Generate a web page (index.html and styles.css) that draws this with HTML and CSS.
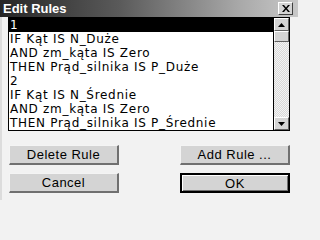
FILE: index.html
```html
<!DOCTYPE html>
<html>
<head>
<meta charset="utf-8">
<link rel="stylesheet" href="styles.css">
</head>
<body>
<div class="dialog">
  <div class="titlebar">
    <span class="title">Edit Rules</span>
    <span class="close">
      <svg width="8" height="7" viewBox="0 0 8 7"><path d="M0 0h2l2 2.5L6 0h2L5 3.5 8 7H6L4 4.5 2 7H0l3-3.5z" fill="#000"/></svg>
    </span>
  </div>
  <div class="body">
    <div class="listbox">
      <ul class="items">
        <li class="item selected">1</li>
        <li class="item">IF Kąt IS N_Duże</li>
        <li class="item">AND zm_kąta IS Zero</li>
        <li class="item">THEN Prąd_silnika IS P_Duże</li>
        <li class="item">2</li>
        <li class="item">IF Kąt IS N_Średnie</li>
        <li class="item">AND zm_kąta IS Zero</li>
        <li class="item">THEN Prąd_silnika IS P_Średnie</li>
      </ul>
      <div class="scrollbar">
        <div class="sbtn"><svg width="7" height="4" viewBox="0 0 7 4"><path d="M3.5 0L7 4H0z" fill="#000"/></svg></div>
        <div class="thumb"></div>
        <div class="track"></div>
        <div class="sbtn"><svg width="7" height="4" viewBox="0 0 7 4"><path d="M0 0h7L3.5 4z" fill="#000"/></svg></div>
      </div>
    </div>
    <div class="buttons">
      <button class="btn">Delete Rule</button>
      <button class="btn">Add Rule ...</button>
      <button class="btn">Cancel</button>
      <button class="btn default">OK</button>
    </div>
  </div>
</div>
</body>
</html>
```
FILE: styles.css
```css
html, body {
  margin: 0;
  padding: 0;
  background: #f2f2f2;
}
.dialog {
  width: 298px;
  height: 200px;
  font-family: "DejaVu Sans", Verdana, sans-serif;
  font-size: 12px;
  color: #000;
  border-left: 2px solid #dcdcdc;
  box-sizing: border-box;
}
.titlebar {
  height: 17px;
  margin-left: -2px;
  background: linear-gradient(to right, #262626 0%, #5a5a5a 40%, #a8a8a8 80%, #c8c8c8 100%);
  display: flex;
  align-items: center;
  justify-content: space-between;
  padding: 0 5px 0 3px;
}
.title {
  color: #fff;
  font-family: "Liberation Sans", Arial, sans-serif;
  font-weight: bold;
  font-size: 13px;
}
.close {
  width: 13px;
  height: 11px;
  background: #d4d4d4;
  border-top: 1px solid #fff;
  border-left: 1px solid #fff;
  border-right: 1px solid #404040;
  border-bottom: 1px solid #404040;
  display: flex;
  align-items: center;
  justify-content: center;
}
.body {
  padding: 0 8px 0 6px;
}
.listbox {
  display: flex;
  height: 114px;
  border: 1px solid #000;
  background: #fff;
  box-sizing: border-box;
}
.items {
  flex: 1;
  list-style: none;
  margin: 0;
  padding: 0;
  overflow: hidden;
}
.item {
  height: 14px;
  line-height: 14px;
  padding-left: 1px;
  white-space: nowrap;
  letter-spacing: 0.7px;
}
.selected {
  background: #000;
  color: #fff;
}
.scrollbar {
  width: 15px;
  flex: none;
  display: flex;
  flex-direction: column;
  border-left: 1px solid #000;
}
.sbtn {
  height: 13px;
  background: #d4d4d4;
  border-top: 1px solid #fff;
  border-left: 1px solid #fff;
  border-right: 1px solid #606060;
  border-bottom: 1px solid #606060;
  box-sizing: border-box;
  display: flex;
  align-items: center;
  justify-content: center;
}
.thumb {
  height: 11px;
  background: #d4d4d4;
  border-top: 1px solid #fff;
  border-left: 1px solid #fff;
  border-right: 1px solid #606060;
  border-bottom: 1px solid #606060;
  box-sizing: border-box;
}
.track {
  flex: 1;
  background-color: #f0f0f0;
  background-image: repeating-conic-gradient(#d8d8d8 0 25%, #f4f4f4 0 50%);
  background-size: 2px 2px;
}
.buttons {
  display: grid;
  grid-template-columns: 110px 110px;
  justify-content: space-between;
  row-gap: 8px;
  margin-top: 14px;
  padding: 0 0 0 1px;
}
.btn {
  height: 20px;
  margin: 0;
  padding: 0;
  font-family: "Liberation Sans", Arial, sans-serif;
  font-size: 13px;
  letter-spacing: 0.5px;
  color: #000;
  background: #d4d4d4;
  border-top: 1px solid #f4f4f4;
  border-left: 1px solid #f4f4f4;
  border-right: 2px solid #707070;
  border-bottom: 2px solid #707070;
}
.default {
  border: 2px solid #000;
  box-shadow: inset 1px 1px 0 #fff, inset -1px -1px 0 #707070;
}
```
